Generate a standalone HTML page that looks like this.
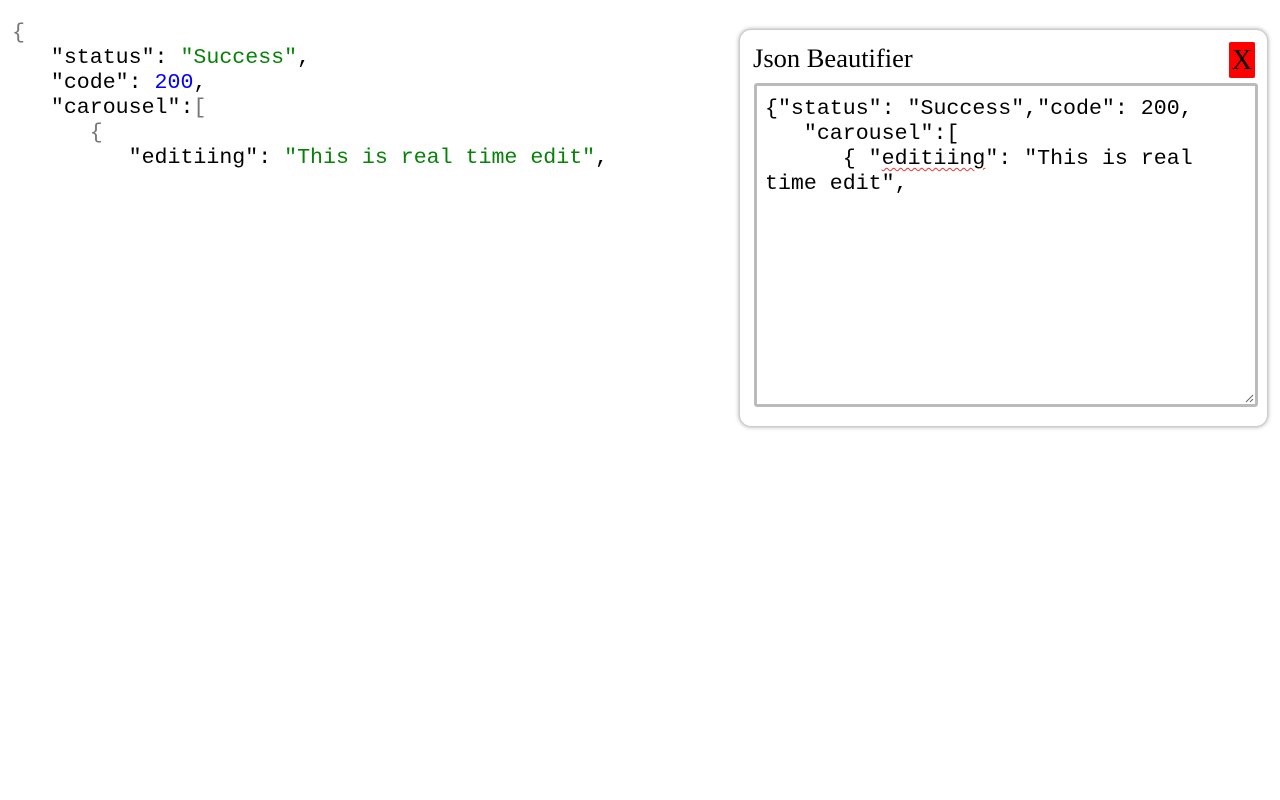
<!DOCTYPE html>
<html><head><style>
body{margin:0;background:#fff;width:1280px;height:800px;position:relative;overflow:hidden}
.m{font-family:"Liberation Mono",monospace;font-size:21.6px;line-height:25px;white-space:pre;color:#000}
#left{position:absolute;left:12px;top:21px}
.g{color:#777}.s{color:#078207}.n{color:#0000ff}
#pop{position:absolute;left:739px;top:29px;width:527px;height:396px;border:1px solid #ccc;border-radius:12px;box-shadow:0 0 4px rgba(0,0,0,.35);background:#fff}
#t{position:absolute;left:13px;top:13px;font-family:"Liberation Serif",serif;font-size:26.5px;color:#000}
#x{position:absolute;left:489px;top:12px;width:26px;height:36px;background:#f00;border-radius:2px;font-family:"Liberation Serif",serif;font-size:28px;line-height:38px;text-align:center;color:#000}
#ta{position:absolute;left:14px;top:53px;width:482px;height:299px;border:3px solid #bbb;border-radius:3px;padding:11px 8px 8px 8px;white-space:pre-wrap}
.sq{text-decoration:underline wavy #e33;text-decoration-thickness:1px;text-underline-offset:3px}
#rz{position:absolute;right:1px;bottom:1px;width:10px;height:10px}
</style></head><body>
<div id="left" class="m"><span class="g">{</span>
   "status": <span class="s">"Success"</span>,
   "code": <span class="n">200</span>,
   "carousel":<span class="g">[</span>
      <span class="g">{</span>
         "editiing": <span class="s">"This is real time edit"</span>,</div>
<div id="pop">
<div id="t">Json Beautifier</div>
<div id="x">X</div>
<div id="ta" class="m">{"status": "Success","code": 200,
   "carousel":[
      { "<span class="sq">editiing</span>": "This is real
time edit",<svg id="rz" viewBox="0 0 10 10"><path d="M9 2L2 9M9 6L6 9" stroke="#666" stroke-width="1"/></svg></div>
</div>
</body></html>
